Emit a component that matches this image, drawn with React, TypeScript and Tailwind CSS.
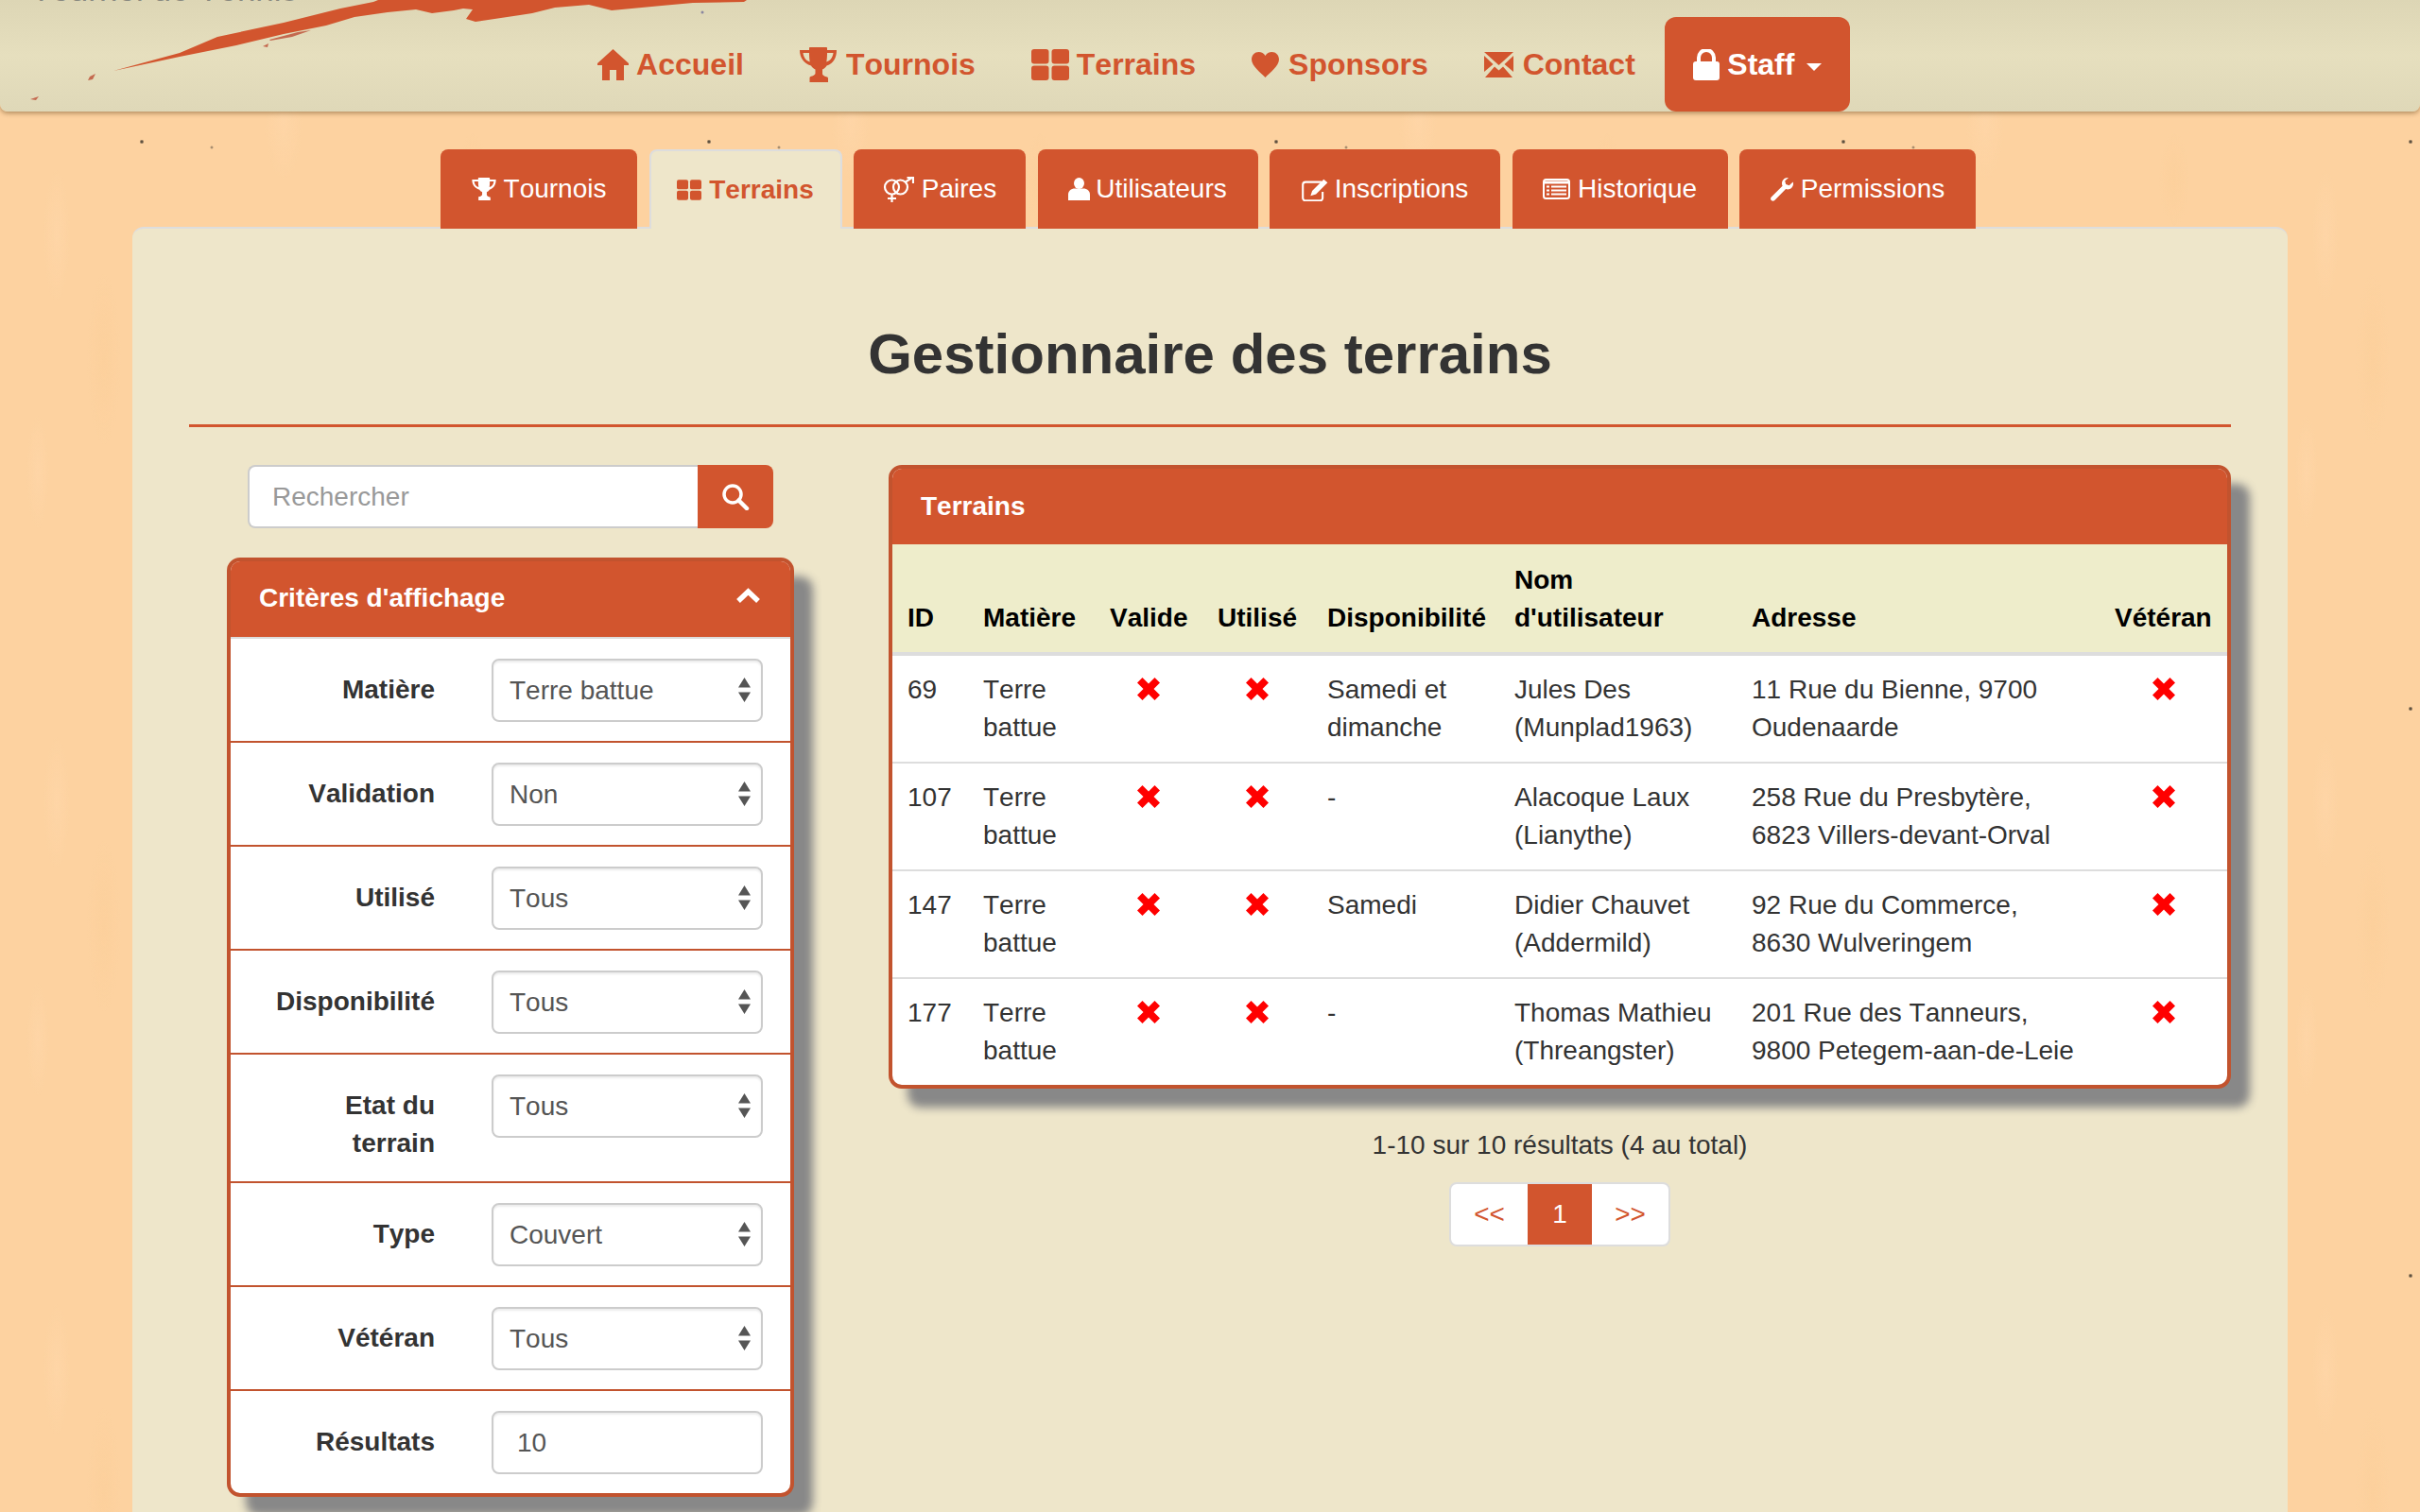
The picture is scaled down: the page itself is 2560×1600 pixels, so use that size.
import type { ReactNode } from 'react';

function HomeIcon() {
  return (
    <svg width="33" height="33" viewBox="0 0 33 33" fill="currentColor">
      <path d="M16.5 0 33 15v2h-5v16h-8V22h-7v11H5V17H0v-2z" />
    </svg>
  );
}

function TrophyIcon({ w, h }: { w: number; h: number }) {
  return (
    <svg width={w} height={h} viewBox="0 0 39 37" fill="currentColor" fillRule="evenodd">
      <path d="M10 1c0-.6.4-1 1-1h17c.6 0 1 .4 1 1v2h10c0 8-3 14-10.500 16.500-1 1.700-2.500 3-4.500 4v4.500c0 2 3 3 5 3.500.7.200 1 .7 1 1.500V37H10.500v-4.500c0-.8.300-1.300 1-1.500 2-.500 5-1.500 5-3.500v-4c-2-1-3.500-2.300-4.500-4C4 17 0 11 0 3h10zM3.500 6c.5 4 2.500 8 7.200 9.500C10.200 12.500 10 9.500 10 6zM29 6c0 3.500-.2 6.500-.7 9.500 4.700-1.500 6.700-5.500 7.200-9.500z" />
    </svg>
  );
}

function GridIcon({ w, h }: { w: number; h: number }) {
  return (
    <svg width={w} height={h} viewBox="0 0 40 33" fill="currentColor">
      <rect x="0" y="0" width="18.500" height="15.500" rx="3" />
      <rect x="21.500" y="0" width="18.500" height="15.500" rx="3" />
      <rect x="0" y="17.500" width="18.500" height="15.500" rx="3" />
      <rect x="21.500" y="17.500" width="18.500" height="15.500" rx="3" />
    </svg>
  );
}

function HeartIcon() {
  return (
    <svg width="29" height="27" viewBox="0 0 29 27" fill="currentColor">
      <path d="M14.500 27C10 22 0 15 0 8c0-5 3.500-8 7.500-8 3 0 5.500 1.500 7 4 1.500-2.500 4-4 7-4 4 0 7.500 3 7.500 8 0 7-10 14-14.500 19z" />
    </svg>
  );
}

function MailIcon() {
  return (
    <svg width="31" height="27" viewBox="0 0 31 27" fill="currentColor">
      <path d="M0 0h31L15.500 14z" />
      <path d="M0 4l9.500 9L0 21z" />
      <path d="M31 4l-9.500 9L31 21z" />
      <path d="M1 27l10-11.500 4.500 4 4.500-4L30 27z" />
    </svg>
  );
}

function LockIcon() {
  return (
    <svg width="28" height="33" viewBox="0 0 28 33" fill="currentColor">
      <rect x="0" y="13" width="28" height="20" rx="3" />
      <path d="M6 15V9a8 8 0 0 1 16 0v6" fill="none" stroke="currentColor" strokeWidth="4" />
    </svg>
  );
}

function CouplesIcon() {
  return (
    <svg width="33" height="27" viewBox="0 0 33 27" fill="none" stroke="currentColor" strokeWidth="2.200">
      <circle cx="9.500" cy="11" r="7.500" />
      <circle cx="18.500" cy="11" r="7.500" />
      <path d="M9.500 18.500V27M5 23h9M24 5.500 31 .9M25.500.9H32V7" />
    </svg>
  );
}

function UserIcon() {
  return (
    <svg width="23" height="24" viewBox="0 0 23 24" fill="currentColor">
      <ellipse cx="11.500" cy="6" rx="5.500" ry="6" />
      <path d="M0 24v-6c0-4 3-6.500 7-6.500h9c4 0 7 2.500 7 6.500v6z" />
    </svg>
  );
}

function EditIcon() {
  return (
    <svg width="28" height="25" viewBox="1 0 24 21.500" fill="none" stroke="currentColor">
      <path d="M19 4H4.500A2.500 2.500 0 0 0 2 6.500v12A2.500 2.500 0 0 0 4.500 21h13a2.500 2.500 0 0 0 2.500-2.500V13" strokeWidth="1.800" />
      <path d="M9 16.500 10.500 12 21 1.500l3.500 3L14 15z" fill="currentColor" stroke="none" />
    </svg>
  );
}

function ListIcon() {
  return (
    <svg width="29" height="22" viewBox="0 0 29 22" fill="none">
      <rect x="1" y="1" width="27" height="20" rx="2.500" stroke="currentColor" strokeWidth="2" />
      <path d="M1 4h27" stroke="currentColor" strokeWidth="3" />
      <path d="M4 8.500h3M4 12.500h3M4 16.500h3M9 8.500h16M9 12.500h16M9 16.500h16" stroke="currentColor" strokeWidth="2" />
    </svg>
  );
}

function WrenchIcon() {
  return (
    <svg width="24" height="25" viewBox="0 0 24 25" fill="currentColor">
      <path d="M18 0c-3.500 0-6 3-6 6 0 1 .2 2 .6 2.800L.8 20.500c-1 1-1 2.500 0 3.500s2.500 1 3.500 0l11.800-12c.7.300 1.300.4 2 .4 3.300 0 5.900-2.800 5.900-6 0-.8-.1-1.400-.3-2l-4 3.800-3.500-1.200-1-3.500L19 .1c-.3 0-.7-.1-1-.1z" />
    </svg>
  );
}

function SearchIcon() {
  return (
    <svg width="30" height="28" viewBox="0 0 30 28" fill="none" stroke="currentColor">
      <circle cx="12" cy="11" r="9" strokeWidth="3.500" />
      <path d="m18.500 17.500 8.500 8.500" strokeWidth="4.500" strokeLinecap="round" />
    </svg>
  );
}

function ChevronUp() {
  return (
    <svg width="25" height="16" viewBox="0 0 25 16" fill="none" stroke="currentColor" strokeWidth="5.500">
      <path d="M2 14 12.500 4 23 14" />
    </svg>
  );
}

function CrossIcon() {
  return (
    <svg width="24" height="24" viewBox="0 0 24 24" fill="#f00" className="mx-auto mt-[7px] block">
      <path d="M5.500 0 12 6.500 18.500 0 24 5.500 17.500 12 24 18.500 18.500 24 12 17.500 5.500 24 0 18.500 6.500 12 0 5.500z" />
    </svg>
  );
}

function SelectArrows() {
  return (
    <svg width="13" height="26" viewBox="0 0 13 26" fill="#555" className="pointer-events-none absolute right-[13px] top-[20px]">
      <path d="M6.500 0 13 10.500H0zM0 15.500h13L6.500 26z" />
    </svg>
  );
}

const navLinks: { label: string; gap: string; icon: ReactNode }[] = [
  { label: 'Accueil', gap: 'gap-[8px]', icon: <HomeIcon /> },
  { label: 'Tournois', gap: 'gap-[10px]', icon: <TrophyIcon w={39} h={37} /> },
  { label: 'Terrains', gap: 'gap-[8px]', icon: <GridIcon w={40} h={33} /> },
  { label: 'Sponsors', gap: 'gap-[10px]', icon: <HeartIcon /> },
  { label: 'Contact', gap: 'gap-[10px]', icon: <MailIcon /> },
];

const tabs: { label: string; width: string; gap: string; active?: boolean; icon: ReactNode }[] = [
  { label: 'Tournois', width: 'w-[208px]', gap: 'gap-[8px]', icon: <TrophyIcon w={26} h={24} /> },
  { label: 'Terrains', width: 'w-[204px]', gap: 'gap-[8px]', active: true, icon: <GridIcon w={26} h={22} /> },
  { label: 'Paires', width: 'w-[182px]', gap: 'gap-[8px]', icon: <CouplesIcon /> },
  { label: 'Utilisateurs', width: 'w-[233px]', gap: 'gap-[6px]', icon: <UserIcon /> },
  { label: 'Inscriptions', width: 'w-[244px]', gap: 'gap-[7px]', icon: <EditIcon /> },
  { label: 'Historique', width: 'w-[228px]', gap: 'gap-[8px]', icon: <ListIcon /> },
  { label: 'Permissions', width: 'w-[250px]', gap: 'gap-[8px]', icon: <WrenchIcon /> },
];

const filters: { label: string; value: string }[] = [
  { label: 'Matière', value: 'Terre battue' },
  { label: 'Validation', value: 'Non' },
  { label: 'Utilisé', value: 'Tous' },
  { label: 'Disponibilité', value: 'Tous' },
  { label: 'Etat du terrain', value: 'Tous' },
  { label: 'Type', value: 'Couvert' },
  { label: 'Vétéran', value: 'Tous' },
];

const rows = [
  { id: 69, dispo: 'Samedi et dimanche', user: 'Jules Des (Munplad1963)', address: ['11 Rue du Bienne, 9700', 'Oudenaarde'] },
  { id: 107, dispo: '-', user: 'Alacoque Laux (Lianythe)', address: ['258 Rue du Presbytère,', '6823 Villers-devant-Orval'] },
  { id: 147, dispo: 'Samedi', user: 'Didier Chauvet (Addermild)', address: ['92 Rue du Commerce,', '8630 Wulveringem'] },
  { id: 177, dispo: '-', user: 'Thomas Mathieu (Threangster)', address: ['201 Rue des Tanneurs,', '9800 Petegem-aan-de-Leie'] },
];

function Navbar() {
  return (
    <header className="relative z-10 flex h-[118px] items-end justify-center overflow-hidden rounded-b-[8px] bg-gradient-to-b from-[#ddd6b5] via-[#e6dfbe] to-[#dfd8b8] shadow-[0_2px_5px_rgba(90,60,20,0.45)]">
      <span className="absolute left-[33px] top-[-32px] text-[35px] leading-[42px] text-[#8a8a80]">Tournoi de Tennis</span>
      <svg width="1040" height="118" viewBox="0 0 1040 118" className="absolute left-0 top-0">
        <path
          fill="#d2552e"
          d="M120 75 190 56 230 39 300 24 360 9 395 2 400 0H790L787 2 733 3 700 6 647 11 623 5 587 8 563 14 550 16 503 23 493 20 500 10 490 9 480 11 457 14 440 10 410 13 375 18 345 27 300 36 250 48 190 60z"
        />
        <path fill="#c4694f" d="m285 42 30-8 14-2-20 7-23 4zM278 49l6-3-1 4zM95 81l6-3-3 6-5 1zM32 105l9-3-3 4z" />
        <circle cx="743" cy="13" r="1.500" fill="#8a87a0" />
      </svg>
      <nav className="relative flex h-[100px] items-stretch text-[32px] font-bold text-[#d2552e]">
        {navLinks.map((link) => (
          <a key={link.label} className={`flex items-center px-[29.5px] ${link.gap}`}>
            {link.icon}
            <span>{link.label}</span>
          </a>
        ))}
        <a className="ml-[2px] flex items-center gap-[8px] rounded-[12px] bg-[#d2552e] px-[30px] text-white">
          <LockIcon />
          <span>Staff</span>
          <svg width="16" height="8" viewBox="0 0 16 8" fill="currentColor" className="ml-[5px] mt-[6px]">
            <path d="M0 0h16L8 8z" />
          </svg>
        </a>
      </nav>
    </header>
  );
}

function Tabs() {
  return (
    <div className="relative z-10 mt-[40px] -mb-[2px] flex h-[84px] justify-center gap-[12.5px] pr-[4px] text-[28px]">
      {tabs.map((tab) => (
        <a
          key={tab.label}
          className={`flex items-center justify-center rounded-t-[8px] ${tab.width} ${tab.gap} ${
            tab.active ? 'border-x-2 border-t-2 border-[#ddd] bg-[#eee6ca] font-bold text-[#d2552e]' : 'bg-[#d2552e] text-white'
          }`}
        >
          {tab.icon}
          <span>{tab.label}</span>
        </a>
      ))}
    </div>
  );
}

function Filters() {
  return (
    <div className="w-[600px]">
      <div className="mx-[22px] flex h-[67px]">
        <input
          placeholder="Rechercher"
          className="min-w-0 flex-1 rounded-l-[8px] border-2 border-r-0 border-[#ccc] bg-white px-[24px] text-[28px] text-[#555] placeholder:text-[#999]"
        />
        <button className="flex w-[80px] items-center justify-center rounded-r-[8px] bg-[#d2552e] text-white">
          <SearchIcon />
        </button>
      </div>

      <div className="mt-[31px] overflow-hidden rounded-[14px] border-4 border-[#c2532e] bg-white shadow-[20px_20px_10px_#888]">
        <div className="flex h-[82px] items-center justify-between border-b-2 border-[#ddd] bg-[#d2552e] pb-[2px] pl-[30px] pr-[32px] text-[28px] font-bold text-white">
          <span>Critères d'affichage</span>
          <span className="mb-[6px]">
            <ChevronUp />
          </span>
        </div>
        {filters.map((filter) => (
          <div key={filter.label} className="flex items-start border-b-2 border-[#c2532e] pb-[20px] pl-[46px] pt-[21px]">
            <label className="w-[170px] pt-[13px] text-right text-[28px] font-bold leading-[40px] text-[#333]">{filter.label}</label>
            <div className="relative ml-[60px] w-[287px]">
              <select
                defaultValue={filter.value}
                className="h-[67px] w-full appearance-none rounded-[8px] border-2 border-[#ccc] bg-white pl-[17px] text-[28px] text-[#555] shadow-[inset_0_2px_2px_rgba(0,0,0,0.075)]"
              >
                <option>{filter.value}</option>
              </select>
              <SelectArrows />
            </div>
          </div>
        ))}
        <div className="flex items-start pb-[20px] pl-[46px] pt-[21px]">
          <label className="w-[170px] pt-[13px] text-right text-[28px] font-bold leading-[40px] text-[#333]">Résultats</label>
          <input
            defaultValue="10"
            className="ml-[60px] h-[67px] w-[287px] rounded-[8px] border-2 border-[#ccc] bg-white px-[25px] text-[28px] text-[#555] shadow-[inset_0_2px_2px_rgba(0,0,0,0.075)]"
          />
        </div>
      </div>
    </div>
  );
}

function FieldsTable() {
  const thClass = 'border-b-4 border-[#ddd] px-[16px] pb-[16px] text-left align-bottom font-bold';
  const tdClass = 'px-[16px] py-[16px] align-top';

  return (
    <div className="w-[1420px]">
      <div className="overflow-hidden rounded-[14px] border-4 border-[#c2532e] bg-white shadow-[20px_20px_10px_#888]">
        <div className="flex h-[80px] items-center bg-[#d2552e] pl-[30px] text-[28px] font-bold text-white">Terrains</div>
        <table className="w-full table-fixed border-separate border-spacing-0 text-[28px] leading-[40px] text-[#333]">
          <colgroup>
            <col className="w-[80px]" />
            <col className="w-[134px]" />
            <col className="w-[114px]" />
            <col className="w-[116px]" />
            <col className="w-[198px]" />
            <col className="w-[251px]" />
            <col className="w-[384px]" />
            <col className="w-[135px]" />
          </colgroup>
          <thead>
            <tr className="h-[118px] bg-[#eeedcb] text-black">
              <th className={thClass}>ID</th>
              <th className={thClass}>Matière</th>
              <th className={thClass}>Valide</th>
              <th className={thClass}>Utilisé</th>
              <th className={thClass}>Disponibilité</th>
              <th className={thClass}>Nom d'utilisateur</th>
              <th className={thClass}>Adresse</th>
              <th className={thClass}>Vétéran</th>
            </tr>
          </thead>
          <tbody>
            {rows.map((row, i) => {
              const border = i < rows.length - 1 ? 'border-b-2 border-[#ddd]' : '';
              return (
                <tr key={row.id}>
                  <td className={`${tdClass} ${border}`}>{row.id}</td>
                  <td className={`${tdClass} ${border}`}>Terre battue</td>
                  <td className={`${tdClass} ${border}`}>
                    <CrossIcon />
                  </td>
                  <td className={`${tdClass} ${border}`}>
                    <CrossIcon />
                  </td>
                  <td className={`${tdClass} ${border}`}>{row.dispo}</td>
                  <td className={`${tdClass} ${border}`}>{row.user}</td>
                  <td className={`${tdClass} ${border}`}>
                    {row.address[0]}
                    <br />
                    {row.address[1]}
                  </td>
                  <td className={`${tdClass} ${border}`}>
                    <CrossIcon />
                  </td>
                </tr>
              );
            })}
          </tbody>
        </table>
      </div>

      <p className="mt-[40px] text-center text-[28px] leading-[40px] text-[#333]">1-10 sur 10 résultats (4 au total)</p>

      <div className="mt-[19px] flex justify-center text-[28px]">
        <div className="flex h-[68px] overflow-hidden rounded-[8px] border-2 border-[#ddd] bg-white">
          <a className="flex w-[81px] items-center justify-center text-[#d2552e]">&lt;&lt;</a>
          <a className="-my-[2px] flex w-[68px] items-center justify-center bg-[#d2552e] text-white">1</a>
          <a className="flex w-[81px] items-center justify-center text-[#d2552e]">&gt;&gt;</a>
        </div>
      </div>
    </div>
  );
}

export default function App() {
  return (
    <div className="h-screen overflow-hidden bg-[#fdd2a0] bg-[radial-gradient(circle_2.500px_at_150px_150px,#5f5140_0,#5f5140_1px,transparent_100%),radial-gradient(circle_2px_at_224px_156px,#7b6a55_0,transparent_100%),radial-gradient(ellipse_14px_70px_at_60px_250px,#fed5a6_0,transparent_100%),radial-gradient(ellipse_18px_90px_at_110px_380px,#fcd09c_0,transparent_100%),radial-gradient(ellipse_12px_60px_at_40px_500px,#fed5a6_0,transparent_100%),radial-gradient(ellipse_20px_60px_at_300px_130px,#fed5a6_0,transparent_100%),radial-gradient(ellipse_16px_50px_at_500px_190px,#fcd09c_0,transparent_100%)] bg-[length:600px_600px] font-['Liberation_Sans',sans-serif] [font-kerning:none]">
      <Navbar />
      <Tabs />
      <main className="mx-[140px] h-[1400px] rounded-t-[12px] border-t-2 border-[#ddd] bg-[#eee6ca] px-[60px]">
        <h2 className="pt-[100px] text-center text-[60px] font-bold leading-[66px] text-[#333]">Gestionnaire des terrains</h2>
        <hr className="mt-[41px] border-t-[3px] border-[#d2552e]" />
        <div className="mt-[40px] flex justify-between pl-[40px]">
          <Filters />
          <FieldsTable />
        </div>
      </main>
    </div>
  );
}
